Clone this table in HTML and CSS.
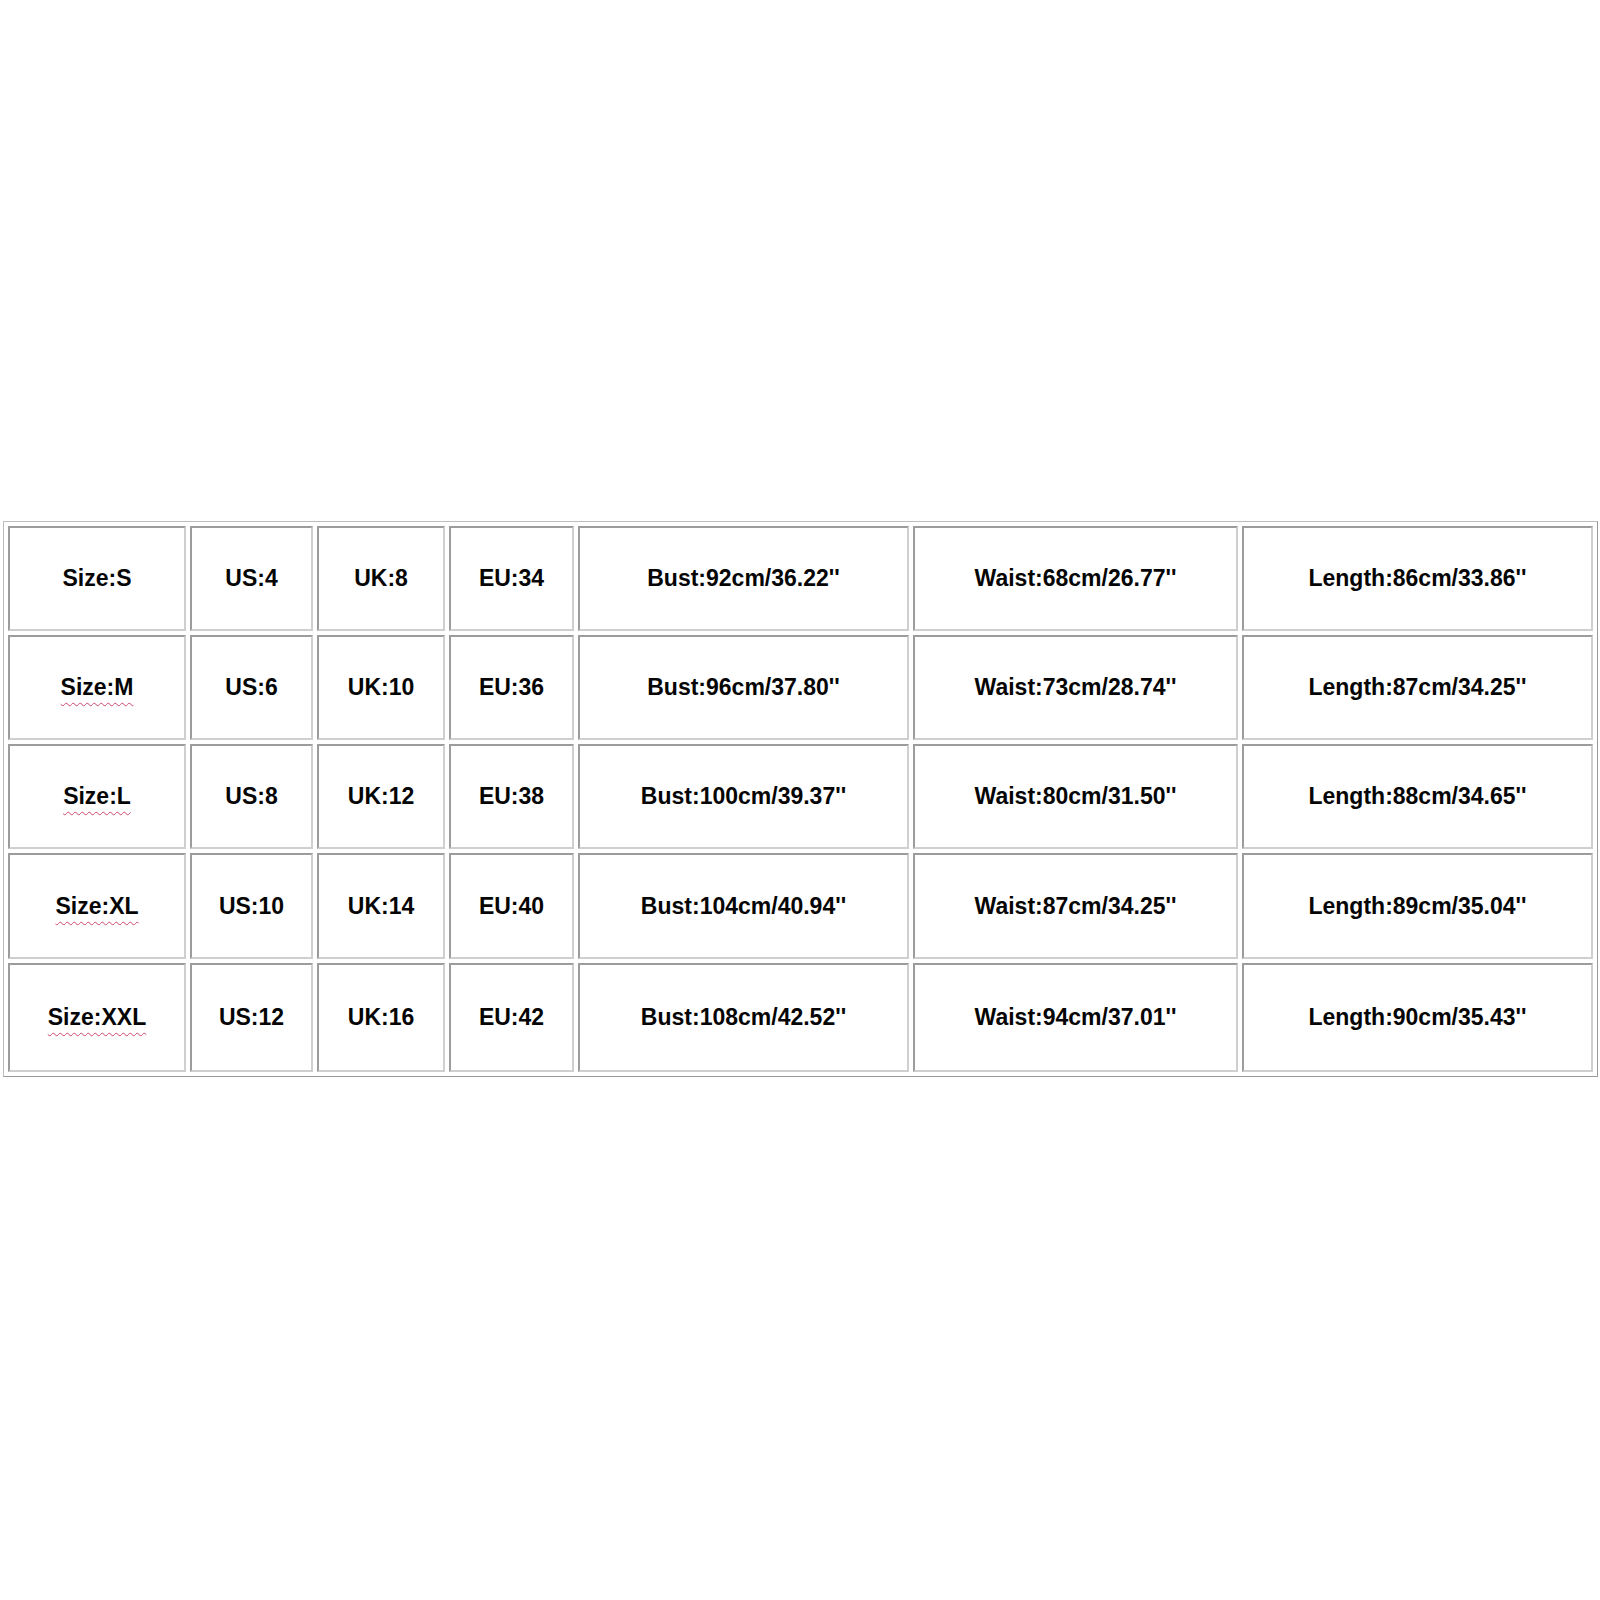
FILE: index.html
```html
<!DOCTYPE html>
<html>
<head>
<meta charset="utf-8">
<link rel="stylesheet" href="styles.css">
</head>
<body>
<div class="page">
<table class="sizes">
  <colgroup>
    <col class="c1"><col class="c2"><col class="c3"><col class="c4"><col class="c5"><col class="c6"><col class="c7">
  </colgroup>
  <tr>
    <td>Size:S</td><td>US:4</td><td>UK:8</td><td>EU:34</td><td>Bust:92cm/36.22''</td><td>Waist:68cm/26.77''</td><td>Length:86cm/33.86''</td>
  </tr>
  <tr>
    <td><span class="spell">Size:M</span></td><td>US:6</td><td>UK:10</td><td>EU:36</td><td>Bust:96cm/37.80''</td><td>Waist:73cm/28.74''</td><td>Length:87cm/34.25''</td>
  </tr>
  <tr>
    <td><span class="spell">Size:L</span></td><td>US:8</td><td>UK:12</td><td>EU:38</td><td>Bust:100cm/39.37''</td><td>Waist:80cm/31.50''</td><td>Length:88cm/34.65''</td>
  </tr>
  <tr class="fourth">
    <td><span class="spell">Size:XL</span></td><td>US:10</td><td>UK:14</td><td>EU:40</td><td>Bust:104cm/40.94''</td><td>Waist:87cm/34.25''</td><td>Length:89cm/35.04''</td>
  </tr>
  <tr class="last">
    <td><span class="spell">Size:XXL</span></td><td>US:12</td><td>UK:16</td><td>EU:42</td><td>Bust:108cm/42.52''</td><td>Waist:94cm/37.01''</td><td>Length:90cm/35.43''</td>
  </tr>
</table>
</div>
</body>
</html>
```
FILE: styles.css
```css
html, body {
  margin: 0;
  padding: 0;
  background: #ffffff;
}
.page {
  padding: 521px 0 0 3px;
}
.sizes {
  border-collapse: separate;
  border-spacing: 4px;
  border: 1px solid #bdbdbd;
  border-right-color: #9a9a9a;
  border-bottom-color: #9a9a9a;
  table-layout: fixed;
  width: 1595px;
  font-family: "Liberation Sans", Arial, sans-serif;
  font-weight: bold;
  font-size: 23px;
  color: #050505;
}
.c1 { width: 178px; }
.c2 { width: 123px; }
.c3 { width: 128px; }
.c4 { width: 125px; }
.c5 { width: 331px; }
.c6 { width: 325px; }
.c7 { width: 351px; }
.sizes td {
  box-sizing: border-box;
  height: 105px;
  padding: 0;
  text-align: center;
  vertical-align: middle;
  border: 2px solid #cfcfcf;
  border-top-color: #9c9c9c;
  border-left-color: #9c9c9c;
  white-space: nowrap;
}
.sizes tr.fourth td {
  height: 106px;
}
.sizes tr.last td {
  height: 109px;
}
.spell {
  text-decoration: underline wavy #d0476a;
  text-decoration-thickness: 1px;
  text-underline-offset: 7px;
}
```
